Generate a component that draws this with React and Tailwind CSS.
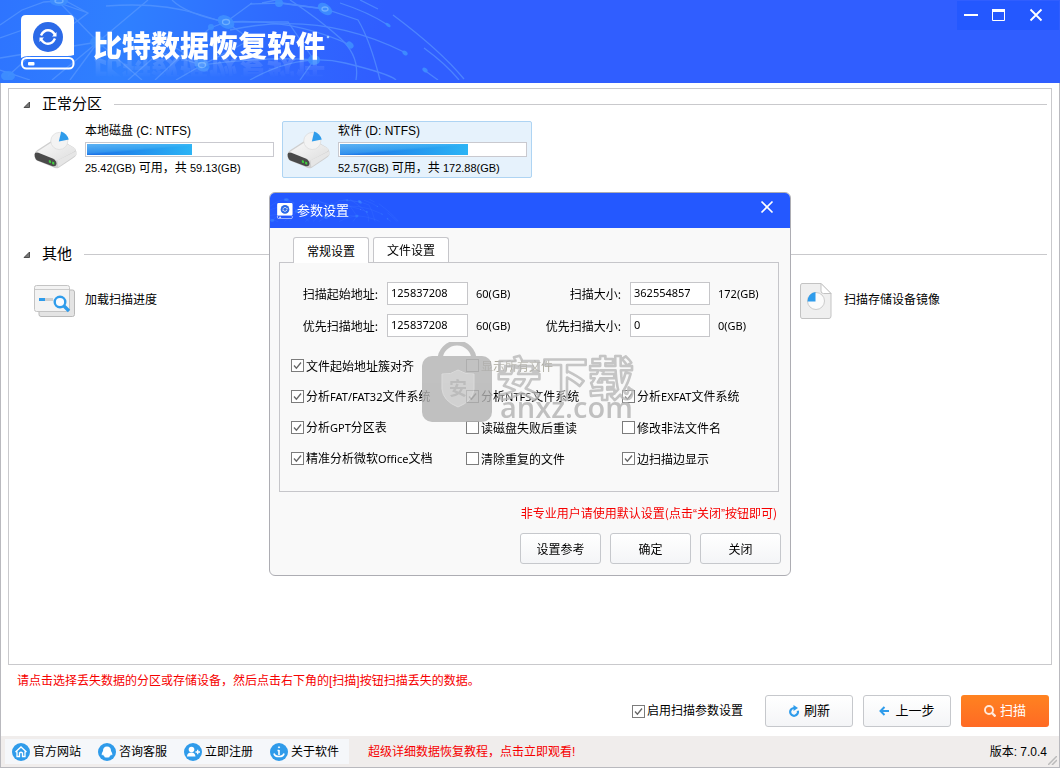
import React from "react";

const sans = "font-['Liberation_Sans','Noto_Sans_CJK_SC',sans-serif]";
const dialogFont = "font-['Noto_Sans_CJK_SC',sans-serif]";

/* Latin runs are set in a slightly smaller humanist face than the Chinese text. */
function Mixed({ children }) {
  return children.split(/([A-Za-z0-9/()[\]:.]+)/).map((part, i) =>
    i % 2 ? (
      <span key={i} className="font-['Noto_Sans','Open_Sans',sans-serif] text-[11px]">{part}</span>
    ) : (
      part
    )
  );
}

function NetArt({ className }) {
  return (
    <svg className={className} viewBox="0 0 470 80" fill="none" stroke="#5f9dff" strokeWidth="1.3" aria-hidden="true">
      <g opacity=".6">
        <path d="M0 25 22 10 44 2 58 1M64 0 88 13 30 56 8 76M88 13 62 4M0 38 34 26" />
        <path d="M58 1 98 42 142 80M148 0 98 42 52 80M98 42 70 80M98 42 0 58" />
        <path d="M106 6Q160 2 198 14T226 22M155 80 210 28 226 22 252 3M226 22Q244 34 262 50" />
        <path d="M128 80 160 52 202 65 250 40M202 65 176 80M202 65Q270 56 314 60M170 44 202 65" />
        <path d="M172 0Q186 14 226 22Q290 18 348 44M250 4 282 3 325 9 358 20Q370 40 380 80" />
        <path d="M262 3 276 0M279 3 325 9M290 0Q320 20 340 38T356 80M314 60 288 22 226 22" />
        <path d="M230 30Q320 10 404 52M340 3Q368 12 388 25M360 0 378 9" />
        <path d="M250 80Q300 52 345 63T396 80M314 60 300 80M0 70 30 80" />
        <path d="M424 48Q446 64 459 80M424 70 438 80M393 15Q440 50 464 79" />
      </g>
      <g fill="#3f8fff" stroke="none" opacity=".9">
        <ellipse cx="59" cy="1" rx="9" ry="5" />
        <ellipse cx="226" cy="22" rx="9" ry="6" transform="rotate(30 226 22)" />
        <ellipse cx="202" cy="65" rx="8" ry="6" transform="rotate(30 202 65)" />
        <ellipse cx="325" cy="9" rx="8" ry="5" transform="rotate(35 325 9)" />
        <ellipse cx="314" cy="60" rx="6" ry="5" />
        <ellipse cx="98" cy="42" rx="8" ry="6" />
        <ellipse cx="8" cy="76" rx="7" ry="5" />
        <ellipse cx="350" cy="45" rx="4" ry="3" transform="rotate(45 350 45)" />
        <ellipse cx="388" cy="25" rx="3" ry="1.5" transform="rotate(35 388 25)" />
        <ellipse cx="405" cy="53" rx="3" ry="2" transform="rotate(35 405 53)" />
        <ellipse cx="425" cy="70" rx="3" ry="2" transform="rotate(35 425 70)" />
        <circle cx="211" cy="27" r="3" />
        <circle cx="279" cy="3" r="4" />
      </g>
      <g stroke="#7ab8ff" opacity=".8">
        <ellipse cx="226" cy="22" rx="3.500" ry="2.500" />
        <ellipse cx="202" cy="65" rx="3.500" ry="2.500" />
        <ellipse cx="325" cy="9" rx="3" ry="2" />
        <ellipse cx="59" cy="1" rx="4" ry="2" />
      </g>
      <circle cx="328" cy="37" r="1.300" fill="#9cc8ff" stroke="none" />
    </svg>
  );
}

function Logo({ className }) {
  return (
    <svg className={className} viewBox="0 0 54 55" aria-hidden="true">
      <path d="M5 0H49Q53 0 53 5V40Q50 41 46 41H8Q3 41 0 43V5Q0 0 5 0Z" fill="#fff" />
      <circle cx="27" cy="22" r="15" fill="#2b6ae8" />
      <path d="M20 20.500Q22.500 15.200 27 15.200Q31.500 15.200 34 20M34 23.500Q31.500 28.800 27 28.800Q22.500 28.800 20 24" fill="none" stroke="#fff" strokeWidth="2.400" />
      <path d="M35.500 17V21.500H31ZM18.500 27V22.500H23Z" fill="#fff" />
      <rect x="1" y="43" width="51.500" height="10.500" rx="4.500" fill="none" stroke="#fff" strokeWidth="2" />
      <rect x="7" y="47" width="6.500" height="3.500" rx="1" fill="#fff" />
    </svg>
  );
}

function DriveIcon() {
  return (
    <svg className="h-[38px] w-[45px] shrink-0" viewBox="0 0 46 40" aria-hidden="true">
      <defs>
        <linearGradient id="driveTop" x1="0" y1="0" x2="1" y2="1">
          <stop offset="0" stopColor="#fbfbfb" />
          <stop offset="1" stopColor="#dedede" />
        </linearGradient>
      </defs>
      <path d="M1 24Q1 22 4 20L21 9Q24 7 28 9L42 17Q45 19 45 22V25Q44 27 41 29L26 39Q23 40 20 38L3 31Q1 30 1 27Z" fill="#cfcfcf" />
      <path d="M2 23 22 10Q25 8 28 10L43 18Q46 20 42 22L25 31Q22 32 19 31Z" fill="url(#driveTop)" />
      <path d="M25 31 45 21V25L26 38Z" fill="#e6e6e6" />
      <path d="M1 25Q1 22 5 23L20 29Q24 31 24 34Q24 38 20 37L4 31Q1 29 1 25Z" fill="#4a4a4a" />
      <path d="M16 30.500 18.200 31.300V34L16 33.200ZM19.500 32 21.700 32.800V35.500L19.500 34.700Z" fill="#3fd13f" />
      <circle cx="27" cy="10.500" r="9" fill="#f3f3f3" stroke="#dcdcdc" strokeWidth=".8" />
      <path d="M26.500 11 29 .5Q35 2.500 37 9Z" fill="#2f9ceb" />
    </svg>
  );
}

function SectionTitle({ children }) {
  return (
    <div className="flex h-6 items-center">
      <svg className="mr-3 h-[7px] w-[7px]" viewBox="0 0 7 7" aria-hidden="true">
        <path d="M6.500 1V6.500H1Z" fill="#777" stroke="#333" strokeWidth=".8" />
      </svg>
      <h2 className="mr-3 text-[15px] leading-6">{children}</h2>
      <span className="h-px flex-1 bg-[#c9c9cc]" />
    </div>
  );
}

function Drive({ name, label, info, used, selected }) {
  return (
    <button
      type="button"
      className={
        "flex h-[57px] items-center rounded-[2px] border pl-[3px] text-left " +
        (selected ? "border-[#aed4f3] bg-[#e6f2fc]" : "border-transparent")
      }
    >
      <DriveIcon />
      <span className="ml-[7px] flex flex-col gap-px pt-px">
        <span className="text-[12px] leading-[19px]">{name} {label}</span>
        <span className="block h-[15px] w-[189px] border border-[#c9c9cf] bg-white p-px">
          <span
            className="block h-full bg-[linear-gradient(175deg,rgba(130,215,250,.65)_0%,rgba(80,185,245,.45)_45%,transparent_55%),linear-gradient(90deg,#1b6fe6,#2cb4f5)]"
            style={{ width: used + "%" }}
          />
        </span>
        <span className="text-[11px] leading-[20px]">
          {info[0]}(GB) <span className="text-[12px]">可用，共</span> {info[1]}(GB)
        </span>
      </span>
    </button>
  );
}

function Check({ children, checked, disabled }) {
  return (
    <label className={"flex items-center gap-[2px] whitespace-nowrap text-[12px] leading-[18px] " + (disabled ? "text-[#aaa89c]" : "text-black")}>
      <span className="grid size-[13px] shrink-0 place-items-center">
        <input
          type="checkbox"
          defaultChecked={checked}
          disabled={disabled}
          className="peer col-start-1 row-start-1 size-[13px] appearance-none border border-[#7c7c7c] bg-white disabled:border-[#999]"
        />
        <svg viewBox="0 0 11 11" className="pointer-events-none invisible col-start-1 row-start-1 size-[11px] peer-checked:visible" aria-hidden="true">
          <path d="M2 5.500 4.400 8.200 9 2.500" fill="none" stroke="#666" strokeWidth="1.300" />
        </svg>
      </span>
      <span><Mixed>{children}</Mixed></span>
    </label>
  );
}

function Field({ id, label, value, unit }) {
  return (
    <>
      <label htmlFor={id} className="whitespace-nowrap pr-px text-right text-[12px] leading-[23px]">{label}:</label>
      <input
        id={id}
        defaultValue={value}
        className="h-[23px] w-full min-w-0 border border-[#c6c6c9] bg-white px-[3px] pb-[3px] font-['Noto_Sans','Open_Sans',sans-serif] text-[11px] leading-[18px]"
      />
      <span className="font-['Noto_Sans','Open_Sans',sans-serif] text-[11px] leading-[23px]">{unit}</span>
    </>
  );
}

function Watermark() {
  return (
    <svg className="pointer-events-none absolute left-[151px] top-[149px] h-[84px] w-[216px]" viewBox="0 0 216 84" aria-hidden="true">
      <g opacity=".8">
        <path d="M19 18A17 17 0 0 1 53 18" fill="none" stroke="#b3b3b3" strokeWidth="5" />
        <rect x="1" y="14" width="70" height="66" rx="10" fill="#b3b3b3" />
        <path d="M37 28Q45 33 53 32V47Q52 59 37 65Q22 59 21 47V32Q30 33 37 28Z" fill="#c8c8c8" stroke="#d4d4d4" />
        <text x="28" y="53" fontSize="18" fontWeight="700" fill="#adadad" fontFamily="Noto Sans CJK SC, sans-serif">安</text>
        <text x="75" y="53" fontSize="46" fontWeight="700" fill="#f9f9f9" fillOpacity=".35" stroke="#b8b8b8" strokeWidth="2.600" strokeLinejoin="round" fontFamily="Noto Sans CJK SC, sans-serif">安下载</text>
        <text x="79" y="76" fontSize="29" fontWeight="600" fill="#b3b3b3" fontFamily="Open Sans, Noto Sans, sans-serif">anxz.com</text>
      </g>
    </svg>
  );
}

const dialogButton =
  "h-[31px] w-[81px] rounded-[3px] border border-[#c6c8cc] bg-linear-to-b from-white to-[#f4f5f7] text-[12px]";

function SettingsDialog() {
  return (
    <div className="pointer-events-none fixed inset-0 flex items-center justify-center">
      <section
        role="dialog"
        aria-labelledby="dialog-title"
        className={"pointer-events-auto relative w-[522px] overflow-hidden rounded-[6px] border border-[#adadb3] bg-[#f9f9f9] pb-[11px] text-black " + dialogFont}
      >
        <header className="relative flex h-[35px] items-center bg-[#2458ff] pl-[7px] pr-4 text-white">
          <NetArt className="absolute left-0 top-0 h-[35px] w-[130px] opacity-60" />
          <Logo className="relative size-4" />
          <h1 id="dialog-title" className="relative ml-1 flex-1 pb-[2px] text-[13px] leading-5">参数设置</h1>
          <button type="button" aria-label="关闭窗口" className="mb-2">
            <svg className="size-[14px]" viewBox="0 0 14 14" aria-hidden="true">
              <path d="M1.500 1.500 12.500 12.500M12.500 1.500 1.500 12.500" stroke="#fff" strokeWidth="1.700" />
            </svg>
          </button>
        </header>

        <div className="px-[9px] pt-[9px]">
          <div role="tablist" className="flex gap-1 pl-[14px] text-[12px]">
            <button type="button" role="tab" aria-selected="true" className="relative z-10 -mb-px h-[26px] w-[76px] rounded-t-[3px] border border-b-0 border-[#c6c6ca] bg-white">
              常规设置
            </button>
            <button type="button" role="tab" aria-selected="false" className="h-[25px] w-[76px] rounded-t-[3px] border border-b-0 border-[#c6c6ca] bg-white">
              文件设置
            </button>
          </div>

          <div role="tabpanel" className="mr-[2px] border border-[#c6c6ca] pb-[17px] pt-[19px]">
            <div className="grid grid-cols-[99px_81px_56px_82px_80px_1fr] gap-x-2 gap-y-[9px]">
              <Field id="scan-start" label="扫描起始地址" value="125837208" unit="60(GB)" />
              <Field id="scan-size" label="扫描大小" value="362554857" unit="172(GB)" />
              <Field id="first-start" label="优先扫描地址" value="125837208" unit="60(GB)" />
              <Field id="first-size" label="优先扫描大小" value="0" unit="0(GB)" />
            </div>

            <div className="mt-[13px] grid auto-rows-[31px] grid-cols-[175px_156px_1fr] items-center pl-[11px]">
              <Check checked>文件起始地址簇对齐</Check>
              <Check disabled>显示所有文件</Check>
              <span />
              <Check checked>分析FAT/FAT32文件系统</Check>
              <Check checked>分析NTFS文件系统</Check>
              <Check checked>分析EXFAT文件系统</Check>
              <Check checked>分析GPT分区表</Check>
              <Check>读磁盘失败后重读</Check>
              <Check>修改非法文件名</Check>
              <Check checked>精准分析微软Office文档</Check>
              <Check>清除重复的文件</Check>
              <Check checked>边扫描边显示</Check>
            </div>
          </div>

          <p className="mt-3 pr-1 text-right text-[12px] leading-[18px] text-[#f60000]">
            非专业用户请使用默认设置(点击<span className="font-['Liberation_Sans']">“</span>关闭<span className="font-['Liberation_Sans']">”</span>按钮即可)
          </p>
          <div className="mt-[10px] flex justify-end gap-[9px]">
            <button type="button" className={dialogButton}>设置参考</button>
            <button type="button" className={dialogButton}>确定</button>
            <button type="button" className={dialogButton}>关闭</button>
          </div>
        </div>
        <Watermark />
      </section>
    </div>
  );
}

function FooterLink({ children, icon }) {
  return (
    <a href="#" className="flex items-center gap-[3px] pl-[7px] pr-[10px]">
      <svg className="size-[18px]" viewBox="0 0 18 18" aria-hidden="true">
        <circle cx="9" cy="9" r="9" fill="#2f9bea" />
        {icon}
      </svg>
      {children}
    </a>
  );
}

const mainButton =
  "flex h-8 w-[88px] items-center justify-center rounded-[3px] border border-[#c6c8cc] bg-linear-to-b from-white to-[#f4f5f7] text-[13px]";

export default function App() {
  return (
    <div className={"flex min-h-screen flex-col bg-white text-black " + sans}>
      <header className="relative flex h-[83px] justify-between overflow-hidden bg-[linear-gradient(100deg,#2e74ff_0%,#2f80ff_12%,#2f6aff_26%,#305eff_36%)]">
        <NetArt className="absolute left-0 top-0 h-[80px] w-[470px]" />
        <div className="relative flex items-start pl-[21px] pt-[15px]">
          <Logo className="h-[55px] w-[54px]" />
          <h1 className="ml-[18px] mt-[10px] text-[29px] font-black leading-[38px] text-white font-['Noto_Sans_CJK_SC',sans-serif] [-webkit-box-reflect:below_-10px_linear-gradient(transparent_35%,rgba(255,255,255,.2))]">
            比特数据恢复软件
          </h1>
        </div>
        <div className="relative mr-px mt-px flex h-[29px] w-[102px] items-start justify-between bg-[#2458ff] pl-[7px] pr-4 pt-[7px]">
          <button type="button" aria-label="最小化">
            <svg className="size-[14px]" viewBox="0 0 14 14"><path d="M0 7H14" stroke="#fff" strokeWidth="2" /></svg>
          </button>
          <button type="button" aria-label="最大化">
            <svg className="size-[14px]" viewBox="0 0 14 14"><path d="M1.500 1.500H13.500V12.500H1.500Z" fill="none" stroke="#fff" /><path d="M1 2.500H14" stroke="#fff" strokeWidth="3" /></svg>
          </button>
          <button type="button" aria-label="关闭" className="ml-3">
            <svg className="size-[14px]" viewBox="0 0 14 14"><path d="M1.500 1.500 12.500 12.500M12.500 1.500 1.500 12.500" stroke="#fff" strokeWidth="1.800" /></svg>
          </button>
        </div>
      </header>

      <div className="flex flex-1 flex-col border border-t-0 border-[#b9b9be]">
        <main className="mx-[7px] mt-[5px] flex-1 border border-[#c9c9cc] pl-[14px] pr-1 pt-[3px]">
          <SectionTitle>正常分区</SectionTitle>
          <div className="mt-[5px] grid grid-cols-[repeat(4,250px)] gap-[3px] pl-[6px]">
            <Drive name="本地磁盘" label="(C: NTFS)" info={["25.42", "59.13"]} used={57} />
            <Drive name="软件" label="(D: NTFS)" info={["52.57", "172.88"]} used={69} selected />
          </div>

          <div className="mt-[64px]">
            <SectionTitle>其他</SectionTitle>
          </div>
          <div className="mt-[6px] grid grid-cols-[repeat(4,250px)] gap-[3px] pl-[6px] text-[12px]">
            <button type="button" className="flex h-[57px] items-center pl-1 text-left">
              <svg className="h-[34px] w-[43px]" viewBox="0 0 43 34" aria-hidden="true">
                <rect x="6" y="6" width="35.500" height="26.500" rx="2" fill="#e4e4e4" stroke="#b9b9b9" />
                <rect x="1.500" y="1.500" width="35" height="26" rx="2" fill="#f3f3f3" stroke="#c4c4c4" />
                <path d="M2 5.500H36" stroke="#ccc" />
                <path d="M6 15.500H12" stroke="#2f9ceb" strokeWidth="3" />
                <path d="M12 15.500H20" stroke="#cfcfcf" strokeWidth="3" />
                <circle cx="27" cy="18" r="5.300" fill="#f8fbff" stroke="#2f9ceb" strokeWidth="2.400" />
                <path d="M31 22 36 27" stroke="#2f9ceb" strokeWidth="3.400" />
              </svg>
              <span className="mb-[2px] ml-[9px]">加载扫描进度</span>
            </button>
            <button type="button" className="col-start-4 flex h-[57px] items-center pl-3 text-left">
              <svg className="h-[36px] w-[32px]" viewBox="0 0 32 36" aria-hidden="true">
                <path d="M2 .5H21L31 10.500V33Q31 35.500 29 35.500H2Q.5 35.500 .5 33V3Q.5 .5 2 .5Z" fill="#efefef" stroke="#c3c3c3" />
                <path d="M21 .5V8Q21 10.500 23.500 10.500H31Z" fill="#fff" stroke="#c3c3c3" />
                <circle cx="16" cy="18" r="8.500" fill="#fbfbfb" stroke="#ccc" />
                <path d="M15.500 18.500V9Q8 10 7.500 18.500Z" fill="#2f9ceb" />
              </svg>
              <span className="mb-[2px] ml-3">扫描存储设备镜像</span>
            </button>
          </div>
        </main>

        <p className="ml-4 h-[30px] text-[12px] leading-8 text-[#f60000]">
          请点击选择丢失数据的分区或存储设备，然后点击右下角的[扫描]按钮扫描丢失的数据。
        </p>
        <div className="mb-[9px] mr-[10px] flex items-center justify-end gap-[10px]">
          <div className="mr-3"><Check checked>启用扫描参数设置</Check></div>
          <button type="button" className={mainButton}>
            <svg className="mr-1 size-3" viewBox="0 0 12 12" aria-hidden="true">
              <path d="M6.200 3A3.900 3.900 0 1 0 9.800 5.800" fill="none" stroke="#2f9ceb" strokeWidth="2.200" />
              <path d="M5.500 0V6L10 3Z" fill="#2f9ceb" />
            </svg>
            刷新
          </button>
          <button type="button" className={mainButton}>
            <svg className="mr-[6px] size-[10px]" viewBox="0 0 10 10" aria-hidden="true">
              <path d="M10 5H1.500M5.500 1 1.500 5 5.500 9" fill="none" stroke="#2f9ceb" strokeWidth="2" />
            </svg>
            上一步
          </button>
          <button type="button" className="flex h-8 w-[88px] items-center justify-center rounded-[3px] bg-linear-to-b from-[#ff8220] to-[#ff6a24] text-[13px] text-white">
            <svg className="mr-1 size-3" viewBox="0 0 12 12" aria-hidden="true">
              <circle cx="5" cy="5" r="4" fill="none" stroke="#ffe9dc" strokeWidth="1.900" />
              <path d="M8 8 11.500 11.500" stroke="#ffe9dc" strokeWidth="2.400" />
            </svg>
            扫描
          </button>
        </div>

        <footer className="relative flex h-[31px] items-center bg-[#f0edec] pl-1 pr-3 text-[12px]">
          <nav className="flex h-[25px] bg-[#f5f7fa]">
            <FooterLink icon={<path d="M3.500 9 9 4 14.500 9M5 8.500V13.500H7.500V10Q9 8.500 10.500 10V13.500H13V8.500" fill="none" stroke="#fff" strokeWidth="1.300" />}>官方网站</FooterLink>
            <FooterLink icon={<path d="M9 3.500Q13 3.500 13 8Q15 11 14 12.500L13 11.500Q12.500 13 11.500 13.500Q12 14.500 10 14.500H8Q6 14.500 6.500 13.500Q5.500 13 5 11.500L4 12.500Q3 11 5 8Q5 3.500 9 3.500Z" fill="#fff" />}>咨询客服</FooterLink>
            <FooterLink icon={<g fill="#fff"><circle cx="7.500" cy="6.500" r="2.800" /><path d="M3 13.500Q3 9.500 7.500 9.500Q11 9.500 11.500 13.500Z" /><path d="M11.500 9H16M13.700 6.800V11.200" stroke="#fff" strokeWidth="1.300" /></g>}>立即注册</FooterLink>
            <FooterLink icon={<g fill="none" stroke="#fff" strokeWidth="1.600"><path d="M9 7V12M7.500 7.500H9M4 10.500Q4.500 13.500 9 13.500Q13.500 13.500 14 10.500" /><circle cx="9" cy="4.300" r=".6" fill="#fff" strokeWidth="1" /></g>}>关于软件</FooterLink>
          </nav>
          <a href="#" className="ml-[19px] text-[#f60000]">超级详细数据恢复教程，点击立即观看!</a>
          <span className="ml-auto">版本: 7.0.4</span>
          <svg className="absolute bottom-[2px] right-[2px] size-[9px]" viewBox="0 0 9 9" aria-hidden="true">
            <path d="M0 9 9 0M4 9 9 4" stroke="#bbb" strokeWidth="1.500" />
          </svg>
        </footer>
      </div>

      <SettingsDialog />
    </div>
  );
}
